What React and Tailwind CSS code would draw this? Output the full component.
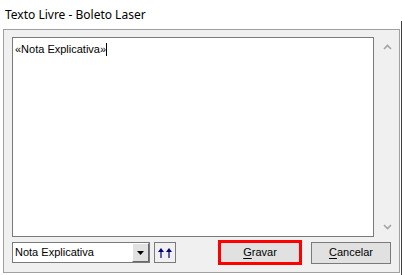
import { useState } from "react";

function ChevronUp() {
  return (
    <svg width="9" height="6" viewBox="0 0 9 6" fill="none">
      <path d="M1 5 L4.5 1.5 L8 5" stroke="#a3a3a3" strokeWidth="1.6" />
    </svg>
  );
}

function ChevronDown() {
  return (
    <svg width="9" height="6" viewBox="0 0 9 6" fill="none">
      <path d="M1 1 L4.5 4.5 L8 1" stroke="#a3a3a3" strokeWidth="1.6" />
    </svg>
  );
}

function UpArrows() {
  return (
    <svg width="14" height="10" viewBox="0 0 14 10" fill="#000080">
      <path d="M3 0 L6 4 L3.6 4 L3.6 10 L2.4 10 L2.4 4 L0 4 Z" />
      <path d="M11 0 L14 4 L11.6 4 L11.6 10 L10.4 10 L10.4 4 L8 4 Z" />
    </svg>
  );
}

export default function App() {
  const [tipo] = useState("Nota Explicativa");

  return (
    <div className="w-[402px] h-[275px] bg-white flex overflow-hidden font-['Liberation_Sans',Arial,sans-serif] text-[11px] text-black">
      <div className="w-[400px] flex flex-col">
        {/* Title bar */}
        <div className="h-[29px] pl-[5px] flex items-center font-['Noto_Sans',sans-serif] text-[12px]">
          <span className="leading-none">Texto Livre - Boleto Laser</span>
        </div>

        {/* Dialog body */}
        <div className="ml-[3px] w-[397px] h-[244px] border border-[#a0a0a0] bg-[#f0f0f0] flex flex-col">
          <div className="flex pl-[8px] pt-[7px]">
            <div className="w-[362px] h-[200px] bg-white border border-[#7a7a7a] pl-[2px] pt-[3px]">
              <span className="leading-[14px]">«Nota Explicativa»</span>
              <span className="inline-block w-px h-[13px] bg-black align-[-3px]" />
            </div>
            <div className="w-[25px] h-[200px] flex flex-col items-center justify-between py-[7px] pl-[2px]">
              <ChevronUp />
              <ChevronDown />
            </div>
          </div>

          {/* Bottom row */}
          <div className="flex items-center pl-[8px] pt-[3px]">
            <div className="w-[138px] h-[21px] bg-white border border-[#7a7a7a] flex items-center">
              <span className="flex-1 pl-[2px] leading-none">{tipo}</span>
              <div className="w-[17px] h-[19px] bg-[#e1e1e1] border-t border-l border-t-white border-l-white border-r border-b border-r-[#696969] border-b-[#696969] flex items-center justify-center">
                <svg width="7" height="4" viewBox="0 0 7 4">
                  <path d="M0 0 H7 L3.5 4 Z" fill="#000" />
                </svg>
              </div>
            </div>
            <div className="ml-[4px] w-[22px] h-[21px] border border-[#7a7a7a] bg-[#f0f0f0] flex items-center justify-center">
              <UpArrows />
            </div>

            <div className="ml-[42px] w-[84px] h-[25px] border-[3px] border-[#ff0000] bg-[#e1e1e1] flex items-center justify-center">
              <span className="leading-none">
                <span className="underline underline-offset-2">G</span>ravar
              </span>
            </div>
            <div className="ml-[9px] w-[80px] h-[22px] border border-[#7a7a7a] bg-[#e1e1e1] flex items-center justify-center">
              <span className="leading-none">
                <span className="underline underline-offset-2">C</span>ancelar
              </span>
            </div>
          </div>
        </div>
      </div>

      {/* edge of window behind */}
      <div className="w-[2px] flex flex-col">
        <div className="h-[21px]" />
        <div className="flex-1 ml-[1px] w-px bg-[#404040]" />
      </div>
    </div>
  );
}
